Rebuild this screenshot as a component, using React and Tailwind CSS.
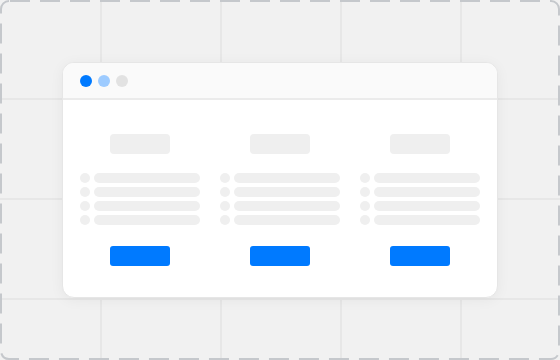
import React from 'react'

const rows = [0, 1, 2, 3]

const Column = () => {
  return (
    <div className="w-[120px] flex flex-col items-center">
      {/* Heading placeholder */}
      <div className="w-[60px] h-[20px] rounded-[4px] bg-[#efefef]"></div>

      {/* List rows */}
      <div className="mt-[19px] w-full flex flex-col gap-[4px]">
        {rows.map((r) => (
          <div key={r} className="flex items-center gap-[4px] h-[10px]">
            <div className="w-[10px] h-[10px] rounded-full bg-[#efefef]"></div>
            <div className="flex-1 h-[10px] rounded-full bg-[#efefef]"></div>
          </div>
        ))}
      </div>

      {/* Button */}
      <div className="mt-[21px] w-[60px] h-[20px] rounded-[3px] bg-[#007aff]"></div>
    </div>
  )
}

const App = () => {
  return (
    <div className="relative w-[560px] h-[360px] overflow-hidden bg-[#f1f1f1] bg-[linear-gradient(to_right,#e7e7e7_2px,transparent_2px),linear-gradient(to_bottom,#e7e7e7_2px,transparent_2px)] bg-[size:120px_100px] bg-[position:100px_98px] flex items-center justify-center">
      {/* Browser window */}
      <div className="relative w-[436px] h-[236px] rounded-[12px] bg-white border border-[#e6e6e6] overflow-hidden shadow-[0_2px_14px_rgba(0,0,0,0.05)]">
        <div className="h-[37px] bg-[#fafafa] border-b-2 border-[#ebebeb] flex items-center pl-[17px] gap-[6px]">
          <div className="w-[12px] h-[12px] rounded-full bg-[#007aff]"></div>
          <div className="w-[12px] h-[12px] rounded-full bg-[#9dcbff]"></div>
          <div className="w-[12px] h-[12px] rounded-full bg-[#e2e2e2]"></div>
        </div>

        <div className="pt-[34px] px-[17px] flex gap-[20px]">
          <Column />
          <Column />
          <Column />
        </div>
      </div>

      {/* Dashed frame */}
      <svg className="absolute inset-0 pointer-events-none" width="560" height="360" viewBox="0 0 560 360">
        <rect x="1" y="1" width="558" height="358" rx="8" fill="none" stroke="#c5c8cc" strokeWidth="2" strokeDasharray="20 10" strokeDashoffset="-1" />
      </svg>
    </div>
  )
}

export default App
